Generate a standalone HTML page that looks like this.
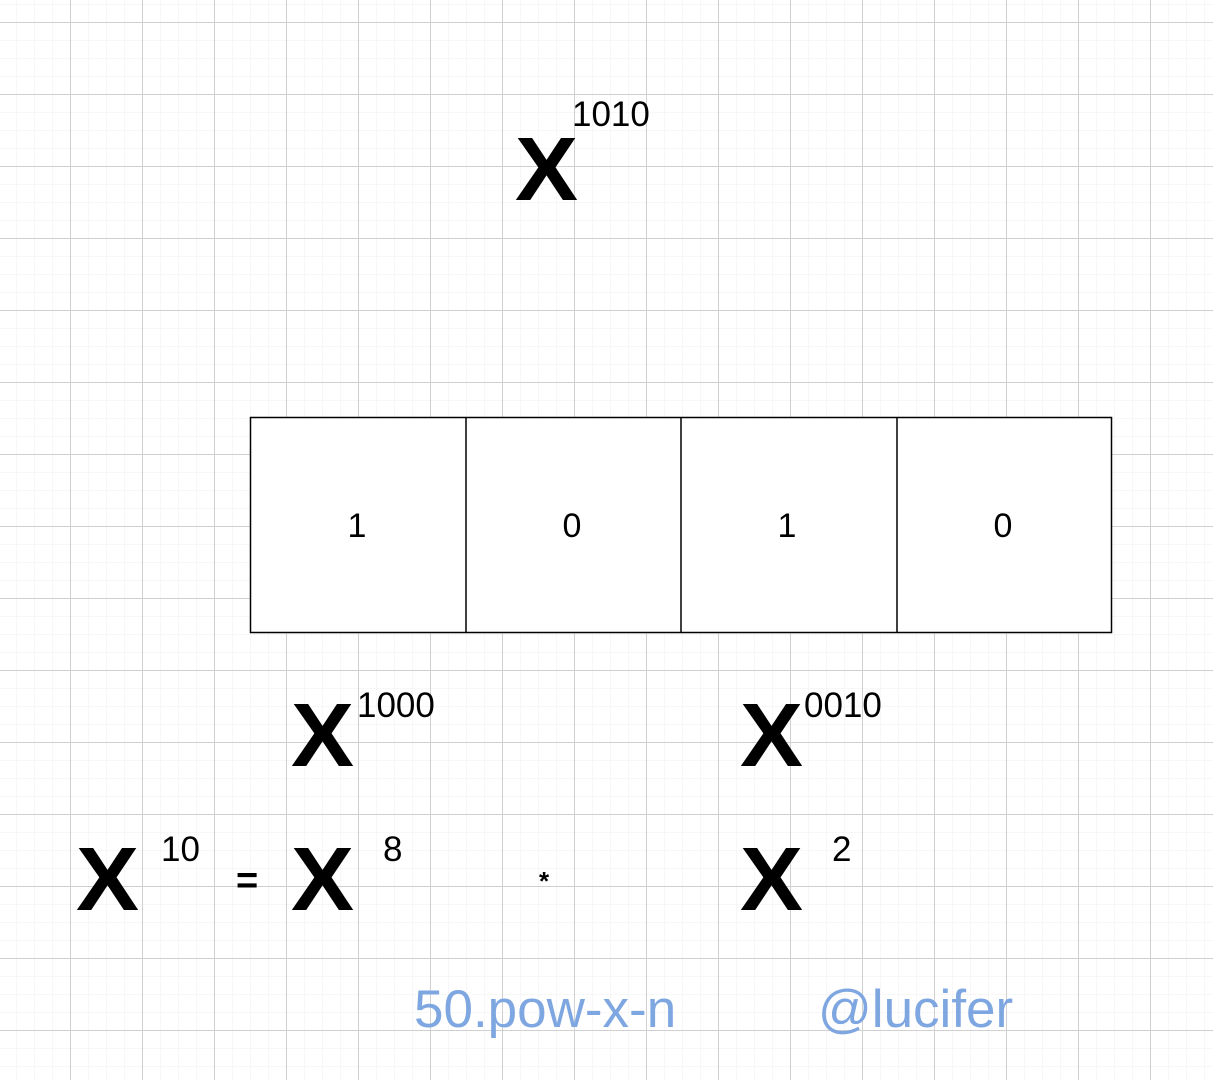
<!DOCTYPE html>
<html><head><meta charset="utf-8"><style>
html,body{margin:0;padding:0;background:#fff;}
svg{display:block}
text{font-family:"Liberation Sans",Arial,sans-serif;}
</style></head><body>
<svg width="1213" height="1080" xmlns="http://www.w3.org/2000/svg">
<defs>
<pattern id="minor" x="16" y="4" width="18" height="18" patternUnits="userSpaceOnUse">
<path d="M0 0H18M0 0V18" stroke="#efefef" stroke-width="1" fill="none"/>
</pattern>
<pattern id="major" x="70" y="22" width="72" height="72" patternUnits="userSpaceOnUse">
<path d="M0 0.5H72M0.5 0V72" stroke="#d0d0d0" stroke-width="1" fill="none"/>
</pattern>
</defs>
<rect width="1213" height="1080" fill="#fff"/>
<rect width="1213" height="1080" fill="url(#minor)"/>
<rect width="1213" height="1080" fill="url(#major)"/>

<g fill="#000">
<text x="515" y="200" font-size="90" font-weight="bold" transform="translate(515 200) scale(1.05 1) translate(-515 -200)">X</text>
<text x="572" y="126" font-size="35">1010</text>

<rect x="250.5" y="417.5" width="861" height="215" fill="#fff" stroke="#000" stroke-width="1.5"/>
<line x1="466" y1="417" x2="466" y2="632" stroke="#000" stroke-width="1.5"/>
<line x1="681" y1="417" x2="681" y2="632" stroke="#000" stroke-width="1.5"/>
<line x1="897" y1="417" x2="897" y2="632" stroke="#000" stroke-width="1.5"/>
<text x="357" y="537" font-size="34" text-anchor="middle">1</text>
<text x="572" y="537" font-size="34" text-anchor="middle">0</text>
<text x="787" y="537" font-size="34" text-anchor="middle">1</text>
<text x="1003" y="537" font-size="34" text-anchor="middle">0</text>

<text x="291" y="766" font-size="90" font-weight="bold" transform="translate(291 766) scale(1.05 1) translate(-291 -766)">X</text>
<text x="357" y="717" font-size="35">1000</text>
<text x="740" y="766" font-size="90" font-weight="bold" transform="translate(740 766) scale(1.05 1) translate(-740 -766)">X</text>
<text x="804" y="717" font-size="35">0010</text>

<text x="76" y="910" font-size="90" font-weight="bold" transform="translate(76 910) scale(1.05 1) translate(-76 -910)">X</text>
<text x="161" y="861" font-size="35">10</text>
<text x="236" y="893" font-size="38" font-weight="bold">=</text>
<text x="291" y="910" font-size="90" font-weight="bold" transform="translate(291 910) scale(1.05 1) translate(-291 -910)">X</text>
<text x="383" y="861" font-size="35">8</text>
<text x="539" y="890" font-size="26" font-weight="bold">*</text>
<text x="740" y="910" font-size="90" font-weight="bold" transform="translate(740 910) scale(1.05 1) translate(-740 -910)">X</text>
<text x="832" y="861" font-size="35">2</text>
</g>
<g fill="#7ea6e0">
<text x="414" y="1027" font-size="53">50.pow-x-n</text>
<text x="818" y="1027" font-size="53">@lucifer</text>
</g>
</svg>
</body></html>
